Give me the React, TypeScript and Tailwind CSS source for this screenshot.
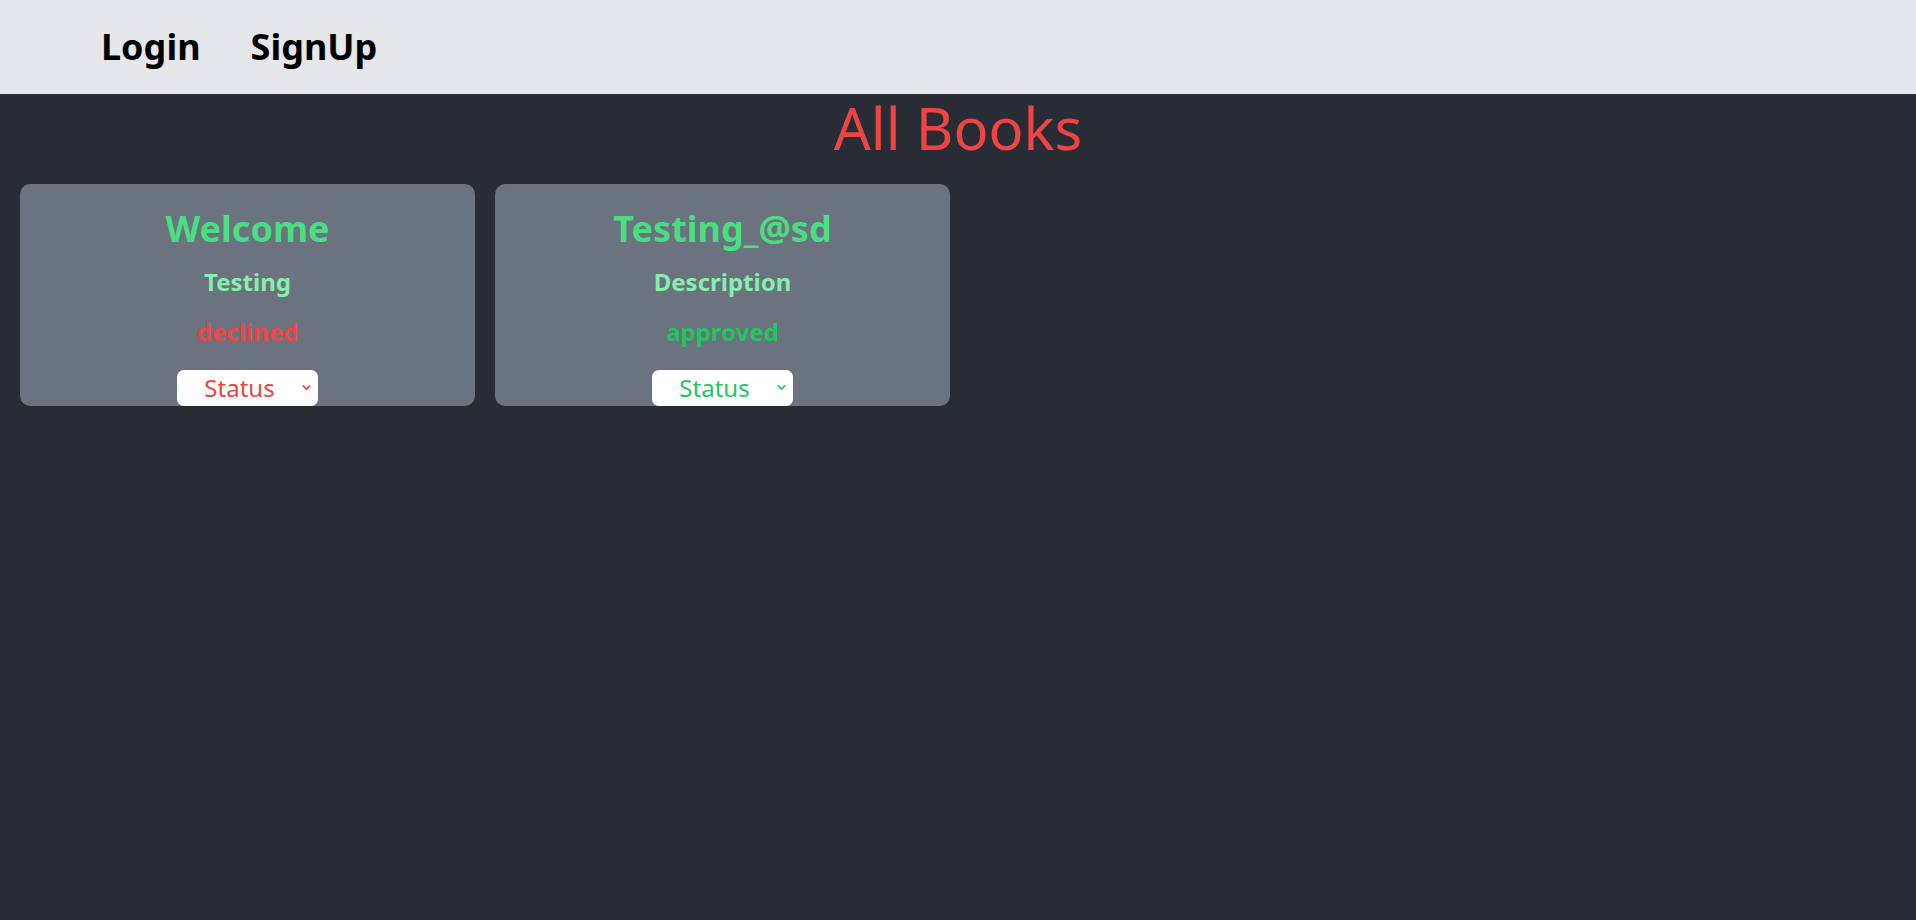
import { ChevronDown } from "lucide-react";

type Book = { title: string; description: string; status: "approved" | "declined" };

const BOOKS: Book[] = [
  { title: "Welcome", description: "Testing", status: "declined" },
  { title: "Testing_@sd", description: "Description", status: "approved" },
];

function Navbar() {
  return (
    <nav className="flex h-[94px] items-center gap-[50px] bg-[#e5e7eb] pl-[101px]">
      <a className="text-[36px] font-bold text-black">Login</a>
      <a className="text-[36px] font-bold text-black">SignUp</a>
    </nav>
  );
}

function BookCard({ book }: { book: Book }) {
  const color = book.status === "approved" ? "text-[#22c55e]" : "text-[#ef4444]";
  return (
    <div className="flex w-[455px] flex-col items-center rounded-[10px] bg-[#6b7280] pt-[19px]">
      <h2 className="text-[36px] leading-[52px] font-bold text-[#4ade80]">{book.title}</h2>
      <p className="mt-[8px] text-[24px] leading-[38px] font-bold text-[#86efac]">{book.description}</p>
      <p className={`mt-[12px] text-[24px] leading-[38px] font-bold ${color}`}>{book.status}</p>
      <div className="relative mt-[19px] flex h-[36px] w-[141px] items-center justify-center rounded-[7px] bg-white pr-[16px]">
        <span className={`text-[24px] leading-none ${color}`}>Status</span>
        <ChevronDown className={`absolute right-[5px] top-[11px] h-[13px] w-[13px] ${color}`} strokeWidth={3} />
      </div>
    </div>
  );
}

export default function App() {
  return (
    <div className="min-h-screen bg-[#282c34]" style={{ fontFamily: '"Noto Sans", "Open Sans", sans-serif' }}>
      <Navbar />
      <h1 className="text-center text-[58px] leading-[68px] text-[#ef4444]">All Books</h1>
      <div className="flex flex-wrap gap-[20px] px-[20px] pt-[22px]">
        {BOOKS.map((b) => (
          <BookCard key={b.title} book={b} />
        ))}
      </div>
    </div>
  );
}
